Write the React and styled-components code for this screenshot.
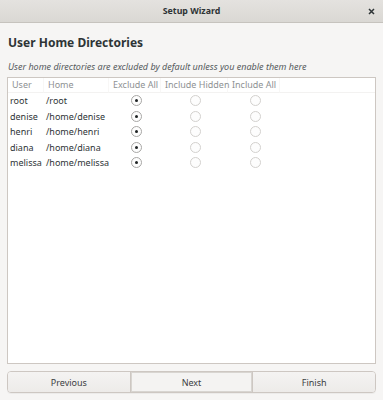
import React from 'react';
import styled, { createGlobalStyle } from 'styled-components';

const GlobalStyle = createGlobalStyle`
  html, body {
    margin: 0;
    padding: 0;
    background: #f6f5f4;
  }
  body {
    font-family: 'Noto Sans', 'DejaVu Sans', sans-serif;
    color: #2e3436;
  }
`;

const Window = styled.div`
  display: flex;
  flex-direction: column;
  width: 383px;
  height: 400px;
  background: #f6f5f4;
  overflow: hidden;
`;

const TitleBar = styled.div`
  display: flex;
  align-items: center;
  justify-content: center;
  position: relative;
  height: 22px;
  flex-shrink: 0;
  background: linear-gradient(#e4e2df, #dad8d4);
  border-bottom: 1px solid #c6c3be;
  font-size: 8.8px;
  font-weight: bold;
  color: #2e3436;
`;

const CloseButton = styled.span`
  position: absolute;
  right: 6px;
  top: 5px;
  width: 12px;
  height: 12px;
  display: flex;
  align-items: center;
  justify-content: center;
`;

const Body = styled.div`
  display: flex;
  flex-direction: column;
  flex: 1;
  padding: 12px 7px 7px 7px;
  min-height: 0;
`;

const Heading = styled.h1`
  margin: 0 0 0 1px;
  font-size: 12px;
  line-height: 16px;
  font-weight: bold;
  color: #2e3436;
`;

const Description = styled.p`
  margin: 10px 0 4px 1px;
  font-size: 9px;
  line-height: 12px;
  font-style: italic;
  color: #555a5c;
`;

const TableBox = styled.div`
  flex: 1;
  background: #ffffff;
  border: 1px solid #cdc7c2;
  min-height: 0;
`;

const Grid = styled.div`
  display: grid;
  grid-template-columns: 36px 65px 52px 67px 52px 1fr;
  font-size: 9px;
`;

const HeaderCell = styled.div`
  height: 14px;
  line-height: 14px;
  padding-left: 4px;
  color: #8e9193;
  border-bottom: 1px solid #f3f2f1;
  border-right: ${p => (p.$last ? 'none' : '1px solid #f8f7f6')};
  white-space: nowrap;
`;

const Cell = styled.div`
  height: 15.5px;
  line-height: 15.5px;
  padding-left: 2px;
  color: #2e3436;
  white-space: nowrap;
  display: flex;
  align-items: center;
  justify-content: ${p => (p.$center ? 'center' : 'flex-start')};
`;

const Radio = styled.span`
  width: 9px;
  height: 9px;
  border-radius: 50%;
  border: 1px solid ${p => (p.$checked ? '#a8a7a5' : '#d3d1ce')};
  background: #fdfdfd;
  display: flex;
  align-items: center;
  justify-content: center;
  &::after {
    content: '';
    width: 3px;
    height: 3px;
    border-radius: 50%;
    background: ${p => (p.$checked ? '#1f2324' : 'transparent')};
  }
`;

const ButtonRow = styled.div`
  display: flex;
  margin-top: 7px;
  height: 20px;
  border: 1px solid #cdc7c2;
  border-radius: 4px;
  overflow: hidden;
  box-shadow: 0 1px 0 rgba(0, 0, 0, 0.04);
`;

const WizButton = styled.button`
  flex: 1;
  border: none;
  border-left: ${p => (p.$first ? 'none' : '1px solid #cdc7c2')};
  background: ${p => (p.$focus ? '#f4f3f2' : 'linear-gradient(#f4f3f2, #edebe9)')};
  box-shadow: ${p => (p.$focus ? 'inset 0 0 0 1px #d8d5d1' : 'none')};
  font-family: 'Noto Sans', 'DejaVu Sans', sans-serif;
  font-size: 9px;
  color: #3c4043;
  padding: 0;
`;

const users = [
  ['root', '/root'],
  ['denise', '/home/denise'],
  ['henri', '/home/henri'],
  ['diana', '/home/diana'],
  ['melissa', '/home/melissa'],
];

export default function App() {
  return (
    <>
      <GlobalStyle />
      <Window>
        <TitleBar>
          Setup Wizard
          <CloseButton>
            <svg width="7" height="7" viewBox="0 0 7 7">
              <path d="M1 1L6 6M6 1L1 6" stroke="#2e3436" strokeWidth="1.5" />
            </svg>
          </CloseButton>
        </TitleBar>
        <Body>
          <Heading>User Home Directories</Heading>
          <Description>
            User home directories are excluded by default unless you enable them here
          </Description>
          <TableBox>
            <Grid>
              <HeaderCell>User</HeaderCell>
              <HeaderCell>Home</HeaderCell>
              <HeaderCell>Exclude All</HeaderCell>
              <HeaderCell>Include Hidden</HeaderCell>
              <HeaderCell>Include All</HeaderCell>
              <HeaderCell $last />
              {users.map(([name, home]) => (
                <React.Fragment key={name}>
                  <Cell>{name}</Cell>
                  <Cell>{home}</Cell>
                  <Cell $center><Radio $checked /></Cell>
                  <Cell $center><Radio /></Cell>
                  <Cell $center><Radio /></Cell>
                  <Cell />
                </React.Fragment>
              ))}
            </Grid>
          </TableBox>
          <ButtonRow>
            <WizButton $first>Previous</WizButton>
            <WizButton $focus>Next</WizButton>
            <WizButton>Finish</WizButton>
          </ButtonRow>
        </Body>
      </Window>
    </>
  );
}
